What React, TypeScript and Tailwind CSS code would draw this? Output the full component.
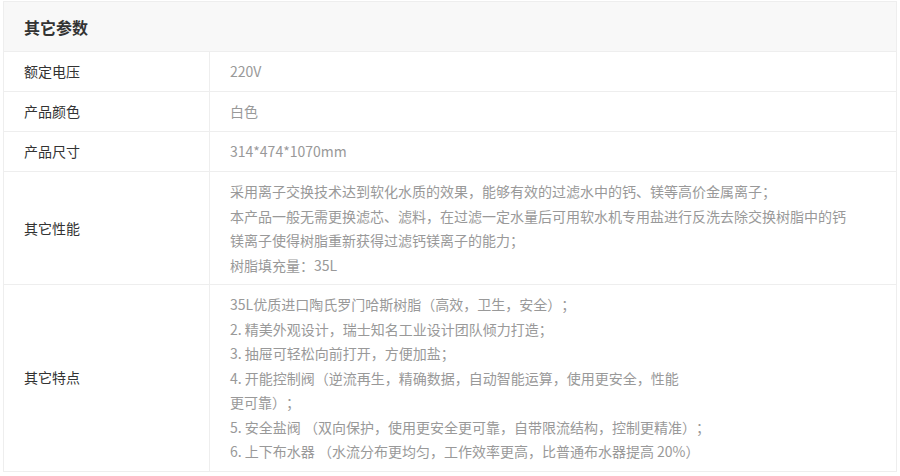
import React from "react";

type Row = {
  label: string;
  lines: string[];
};

const rows: Row[] = [
  { label: "额定电压", lines: ["220V"] },
  { label: "产品颜色", lines: ["白色"] },
  { label: "产品尺寸", lines: ["314*474*1070mm"] },
  {
    label: "其它性能",
    lines: [
      "采用离子交换技术达到软化水质的效果，能够有效的过滤水中的钙、镁等高价金属离子；",
      "本产品一般无需更换滤芯、滤料，在过滤一定水量后可用软水机专用盐进行反洗去除交换树脂中的钙",
      "镁离子使得树脂重新获得过滤钙镁离子的能力；",
      "树脂填充量：35L",
    ],
  },
  {
    label: "其它特点",
    lines: [
      "35L优质进口陶氏罗门哈斯树脂（高效，卫生，安全）；",
      "2. 精美外观设计，瑞士知名工业设计团队倾力打造；",
      "3. 抽屉可轻松向前打开，方便加盐；",
      "4. 开能控制阀（逆流再生，精确数据，自动智能运算，使用更安全，性能",
      "更可靠）；",
      "5. 安全盐阀 （双向保护，使用更安全更可靠，自带限流结构，控制更精准）；",
      "6. 上下布水器 （水流分布更均匀，工作效率更高，比普通布水器提高 20%）",
    ],
  },
];

export default function App() {
  return (
    <div
      lang="zh-CN"
      className="h-[476px] w-[900px] bg-white pt-px font-['Noto_Sans_CJK_SC',sans-serif] [text-spacing-trim:space-all]"
    >
      <div className="ml-[3px] w-[894px] border border-[#eeeeee]">
        {/* header */}
        <div className="flex h-[49px] items-center bg-[#f8f8f8] pl-[20px] text-[16px] font-bold text-[#333]">
          其它参数
        </div>

        {rows.map((r) => {
          const multi = r.lines.length > 1;
          return (
            <div
              key={r.label}
              className={
                "grid grid-cols-[206px_1fr] border-t border-[#eeeeee] " +
                (multi ? "" : "h-[40px]")
              }
            >
              <div className="flex items-center border-r border-[#eeeeee] pl-[20px] text-[14px] text-[#333]">
                {r.label}
              </div>
              <div
                className={
                  "flex flex-col justify-center whitespace-nowrap pl-[20px] text-[14px] text-[#999] " +
                  (multi ? "py-[7px] leading-[24.5px]" : "")
                }
              >
                {r.lines.map((l, i) => (
                  <div key={i}>{l}</div>
                ))}
              </div>
            </div>
          );
        })}
      </div>
    </div>
  );
}
